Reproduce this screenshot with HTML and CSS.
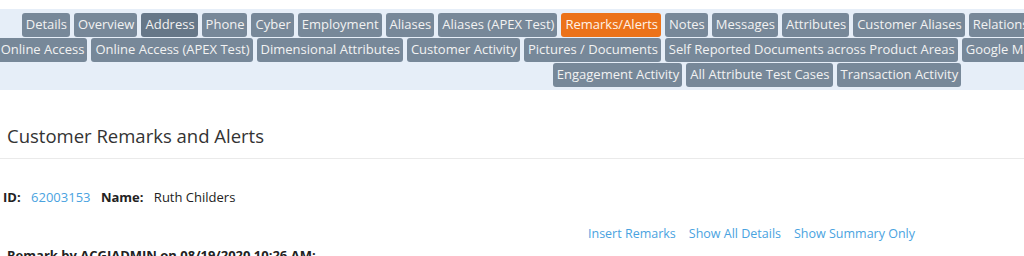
FILE: index.html
```html
<!DOCTYPE html>
<html>
<head>
<title>Customer Remarks and Alerts</title>
<link rel="stylesheet" href="styles.css">
</head>
<body>
<div class="page">

<div class="tabs">
 <div class="tabrow">
  <a class="tab">Details</a>
  <a class="tab">Overview</a>
  <a class="tab hover">Address</a>
  <a class="tab">Phone</a>
  <a class="tab">Cyber</a>
  <a class="tab">Employment</a>
  <a class="tab">Aliases</a>
  <a class="tab">Aliases (APEX Test)</a>
  <a class="tab on">Remarks/Alerts</a>
  <a class="tab">Notes</a>
  <a class="tab">Messages</a>
  <a class="tab">Attributes</a>
  <a class="tab">Customer Aliases</a>
  <a class="tab">Relationships</a>
  <a class="tab">Accounts</a>
  <a class="tab">Identification</a>
  <a class="tab">Watch Lists</a>
  <a class="tab">Risk</a>
  <a class="tab">Households</a>
  <a class="tab">Documents</a>
 </div>
 <div class="tabrow">
  <a class="tab">Online Access</a>
  <a class="tab">Online Access (APEX Test)</a>
  <a class="tab">Dimensional Attributes</a>
  <a class="tab">Customer Activity</a>
  <a class="tab">Pictures / Documents</a>
  <a class="tab">Self Reported Documents across Product Areas</a>
  <a class="tab">Google Maps</a>
  <a class="tab">Cases</a>
  <a class="tab">Alerts History</a>
  <a class="tab">Devices</a>
  <a class="tab">Fraud Alerts</a>
  <a class="tab">Relationship Map</a>
  <a class="tab">Audit Trail</a>
 </div>
 <div class="tabrow">
  <a class="tab">Engagement Activity</a>
  <a class="tab">All Attribute Test Cases</a>
  <a class="tab">Transaction Activity</a>
 </div>
</div>

<h2 class="title">Customer Remarks and Alerts</h2>

<div class="ident">
 <b>ID:</b> <a class="link">62003153</a>
 <b>Name:</b> <span>Ruth Childers</span>
</div>

<div class="actions">
 <a class="link">Insert Remarks</a>
 <a class="link">Show All Details</a>
 <a class="link">Show Summary Only</a>
</div>

<div class="remark">
 <b>Remark by ACGIADMIN on 08/19/2020 10:26 AM:</b>
</div>

</div>
</body>
</html>
```
FILE: styles.css
```css
html, body {
 margin: 0;
 padding: 0;
 overflow: hidden;
 background: #fff;
}
body {
 padding-top: 9px;
 font-family: "Open Sans", "Liberation Sans", sans-serif;
 font-size: 13px;
 color: #222;
}
.page {
 width: 1514px;
}
.tabs {
 background-color: #e6eef8;
 padding: 4px 0 3px 0;
 height: 74px;
}
.tabrow {
 display: flex;
 justify-content: center;
 gap: 4px;
 margin-bottom: 1px;
}
.tab {
 display: block;
 white-space: nowrap;
 background-color: #778899;
 color: #f2f2f2;
 border-radius: 3px;
 height: 24px;
 line-height: 23px;
 padding: 0 3px 0 4px;
 font-size: 13px;
}
.tab.hover {
 background-color: #667788;
}
.tab.on {
 background-color: #ec7219;
 color: #fff3e8;
}
.title {
 margin: 0;
 padding: 34px 7px 10px 7px;
 font-size: 18.5px;
 font-weight: 400;
 color: #333;
 border-bottom: 1px solid #eaeaea;
 line-height: 24px;
}
.ident {
 padding: 29px 3px 0 3px;
 line-height: 18px;
}
.ident b {
 margin-right: 7px;
}
.ident .link {
 margin-right: 7px;
}
.link {
 color: #4aa3df;
 cursor: pointer;
}
.actions {
 display: flex;
 justify-content: center;
 gap: 13px;
 padding: 19px 11px 0 0;
 line-height: 18px;
 font-size: 12.5px;
}
.remark {
 padding: 3px 7px 0 7px;
 line-height: 18px;
}
```
